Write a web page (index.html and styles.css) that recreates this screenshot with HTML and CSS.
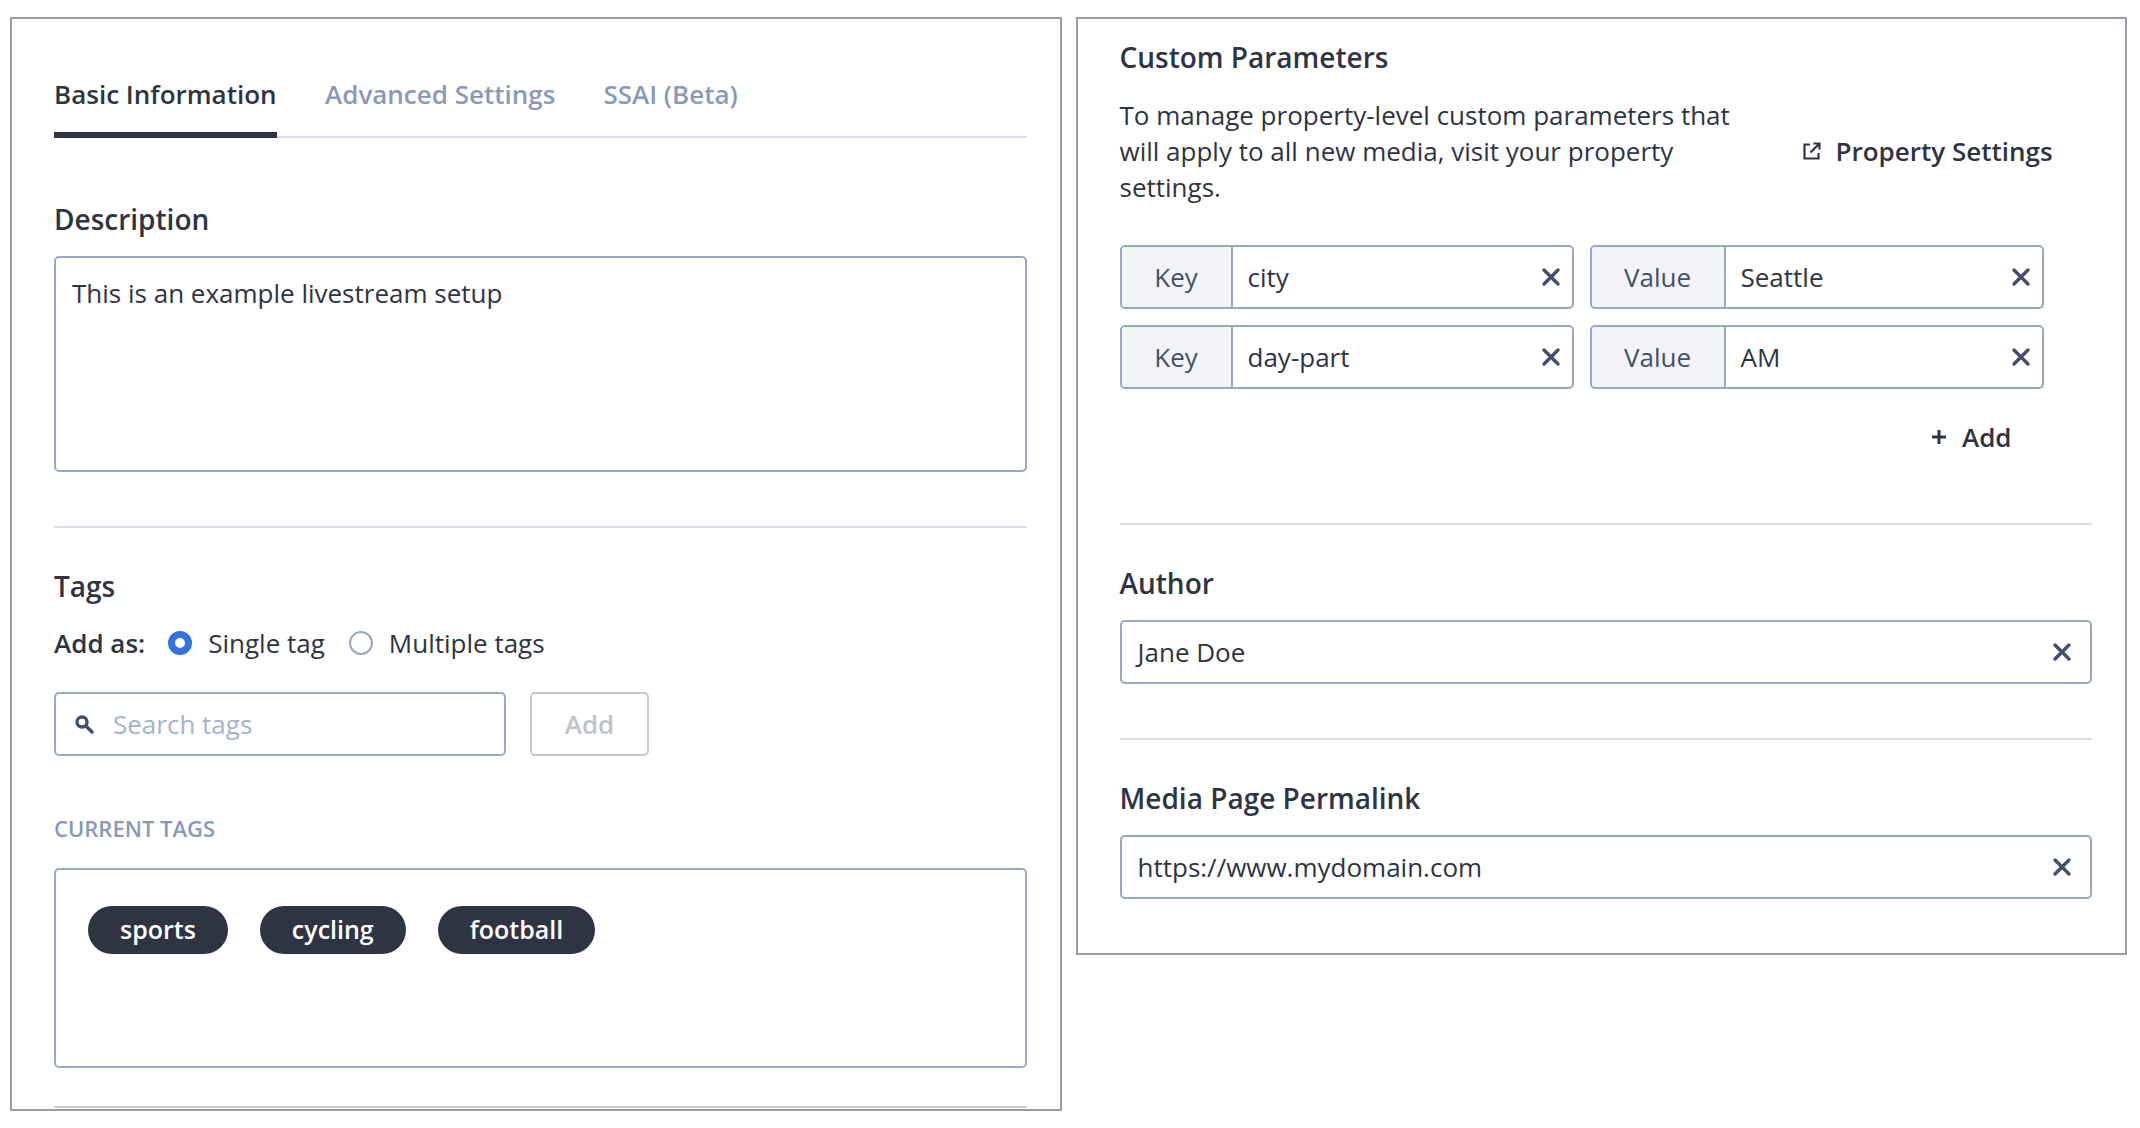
FILE: index.html
```html
<!DOCTYPE html>
<html lang="en">
<head>
<meta charset="utf-8">
<title>Livestream setup</title>
<link rel="stylesheet" href="styles.css">
</head>
<body>
<main class="page">
  <section class="panel panel-left">
    <nav class="tabs">
      <a class="tab tab-active">Basic Information</a>
      <a class="tab">Advanced Settings</a>
      <a class="tab">SSAI (Beta)</a>
    </nav>
    <h2 class="heading heading-desc">Description</h2>
    <div class="box textarea">This is an example livestream setup</div>
    <hr class="rule rule-desc">
    <h2 class="heading heading-tags">Tags</h2>
    <div class="addas">
      <strong class="addas-label">Add as:</strong>
      <span class="radio radio-on"></span><span class="radio-text">Single tag</span>
      <span class="radio"></span><span class="radio-text">Multiple tags</span>
    </div>
    <div class="search-row">
      <div class="box search">
        <svg class="search-icon" viewBox="0 0 20 20" width="20" height="20"><circle cx="8" cy="8" r="5" fill="none" stroke="#454f6b" stroke-width="3.4"/><path d="M12 12l6 6" stroke="#454f6b" stroke-width="3.4" stroke-linecap="round"/></svg>
        <span class="placeholder">Search tags</span>
      </div>
      <div class="btn-disabled">Add</div>
    </div>
    <div class="caps">CURRENT TAGS</div>
    <div class="box tagbox">
      <span class="pill">sports</span>
      <span class="pill">cycling</span>
      <span class="pill">football</span>
    </div>
    <hr class="rule rule-end">
  </section>

  <section class="panel panel-right">
    <h2 class="heading heading-custom">Custom Parameters</h2>
    <div class="intro">
      <p class="intro-text">To manage property-level custom parameters that will apply to all new media, visit your property settings.</p>
      <a class="link">
        <svg viewBox="0 0 20 20" width="20" height="20"><path d="M8 3.5H2.5v14h14V12" transform="translate(0 0)" fill="none" stroke="#2f3443" stroke-width="2.2" stroke-dasharray="none"/><path d="M8.5 11.5L17.5 2.5M11.5 2.5h6v6" fill="none" stroke="#2f3443" stroke-width="2.2"/><path d="M5 1h7v5h7v13H-1V1z" fill="none"/></svg>
        <span>Property Settings</span>
      </a>
    </div>
    <div class="kv-grid">
      <div class="box kv"><span class="addon addon-key">Key</span><span class="kv-value">city</span><svg class="x" viewBox="0 0 20 20" width="20" height="20"><path d="M3 3l14 14M17 3L3 17"/></svg></div>
      <div class="box kv"><span class="addon addon-val">Value</span><span class="kv-value">Seattle</span><svg class="x" viewBox="0 0 20 20" width="20" height="20"><path d="M3 3l14 14M17 3L3 17"/></svg></div>
      <div class="box kv"><span class="addon addon-key">Key</span><span class="kv-value">day-part</span><svg class="x" viewBox="0 0 20 20" width="20" height="20"><path d="M3 3l14 14M17 3L3 17"/></svg></div>
      <div class="box kv"><span class="addon addon-val">Value</span><span class="kv-value">AM</span><svg class="x" viewBox="0 0 20 20" width="20" height="20"><path d="M3 3l14 14M17 3L3 17"/></svg></div>
    </div>
    <div class="add-row">
      <svg viewBox="0 0 20 20" width="20" height="20"><path d="M10 3v14M3 10h14" stroke="#2f3443" stroke-width="3"/></svg>
      <span>Add</span>
    </div>
    <hr class="rule rule-params">
    <h2 class="heading heading-field">Author</h2>
    <div class="box field"><span>Jane Doe</span><svg class="x" viewBox="0 0 20 20" width="20" height="20"><path d="M3 3l14 14M17 3L3 17"/></svg></div>
    <hr class="rule rule-field">
    <h2 class="heading heading-field">Media Page Permalink</h2>
    <div class="box field"><span>https://www.mydomain.com</span><svg class="x" viewBox="0 0 20 20" width="20" height="20"><path d="M3 3l14 14M17 3L3 17"/></svg></div>
  </section>
</main>
</body>
</html>
```

FILE: styles.css
```css
* { box-sizing: border-box; }
html, body { margin: 0; padding: 0; background: #fff; }
body {
  width: 2140px;
  height: 1128px;
  overflow: hidden;
  font-family: "Open Sans", sans-serif;
  font-size: 26px;
  line-height: 36px;
  color: #2f3443;
}
.page {
  display: flex;
  align-items: flex-start;
  gap: 14px;
  padding: 17px 13px 0 10px;
}
.panel {
  width: 1052px;
  border: 2px solid #9b9ca3;
  background: #fff;
  overflow: hidden;
}
.panel-left { height: 1094px; padding: 0 33px 0 42px; }
.panel-right { height: 938px; padding: 0 33px 0 42px; }

.tabs {
  display: flex;
  gap: 48px;
  height: 119px;
  padding-top: 57px;
  border-bottom: 2px solid #d9deea;
}
.tab {
  height: 62px;
  padding-top: 0;
  font-weight: 600;
  color: #8a99b8;
  white-space: nowrap;
}
.tab-active {
  color: #2f3443;
  border-bottom: 6px solid #2f3443;
  height: 62px;
  margin-left: 0;
  width: 223px;
}
.heading {
  margin: 0;
  font-size: 28px;
  line-height: 38px;
  font-weight: 600;
  color: #2f3443;
}
.heading-desc { margin-top: 62px; }
.box {
  border: 2px solid #9aa8c0;
  border-radius: 5px;
  background: #fff;
}
.textarea {
  height: 216px;
  margin-top: 18px;
  padding: 17px 16px;
}
.rule {
  margin: 0;
  border: 0;
  height: 2px;
  background: #d9deea;
}
.rule-desc { margin-top: 54px; }
.heading-tags { margin-top: 39px; }
.addas {
  display: flex;
  align-items: center;
  margin-top: 20px;
  height: 36px;
}
.addas-label { font-weight: 600; margin-right: 23px; }
.radio {
  width: 24px;
  height: 24px;
  border-radius: 50%;
  border: 2px solid #9aa8c0;
  margin-right: 16px;
  flex: none;
}
.radio-on { border: 7px solid #3273dc; }
.radio-text { margin-right: 24px; }
.search-row { display: flex; gap: 24px; margin-top: 31px; }
.search {
  width: 452px;
  height: 64px;
  display: flex;
  align-items: center;
  padding-left: 18px;
}
.placeholder { color: #a6b3c9; margin-left: 19px; }
.btn-disabled {
  width: 119px;
  height: 64px;
  border: 2px solid #c6c8cf;
  border-radius: 5px;
  display: flex;
  align-items: center;
  justify-content: center;
  font-weight: 600;
  color: #c0c3cb;
}
.caps {
  margin-top: 57px;
  font-size: 22px;
  line-height: 30px;
  font-weight: 600;
  color: #8a99b8;
}
.tagbox {
  height: 200px;
  margin-top: 25px;
  padding: 36px 32px;
  display: flex;
  gap: 32px;
  align-items: flex-start;
}
.pill {
  height: 48px;
  padding: 0 32px;
  border-radius: 24px;
  background: #2f3443;
  color: #fff;
  font-weight: 600;
  font-size: 25px;
  line-height: 46px;
}
.rule-end { margin-top: 38px; background: #c9ccd3; }

.heading-custom { margin-top: 19px; }
.intro {
  display: flex;
  align-items: center;
  margin-top: 21px;
}
.intro-text { margin: 0; width: 630px; }
.link {
  display: flex;
  align-items: center;
  gap: 14px;
  margin-left: 52px;
  font-weight: 600;
  white-space: nowrap;
}
.kv-grid {
  display: grid;
  grid-template-columns: 454px 454px;
  gap: 16px;
  margin-top: 40px;
}
.kv {
  height: 64px;
  display: flex;
  align-items: center;
  overflow: hidden;
}
.addon {
  height: 100%;
  display: flex;
  align-items: center;
  justify-content: center;
  background: #f3f4f8;
  border-right: 2px solid #9aa8c0;
  color: #454f6b;
  flex: none;
}
.addon-key { width: 111px; }
.addon-val { width: 134px; }
.kv-value { flex: 1; padding-left: 15px; }
.x {
  flex: none;
  margin-right: 11px;
  fill: none;
  stroke: #454f6b;
  stroke-width: 3.4;
  stroke-linecap: round;
}
.add-row {
  display: flex;
  align-items: center;
  justify-content: flex-end;
  gap: 13px;
  width: 892px;
  height: 36px;
  margin-top: 30px;
  font-weight: 600;
}
.rule-params { margin-top: 68px; }
.heading-field { margin-top: 39px; }
.field {
  height: 64px;
  margin-top: 18px;
  display: flex;
  align-items: center;
  justify-content: space-between;
  padding-left: 16px;
}
.field .x { margin-right: 18px; }
.rule-field { margin-top: 54px; }
```
